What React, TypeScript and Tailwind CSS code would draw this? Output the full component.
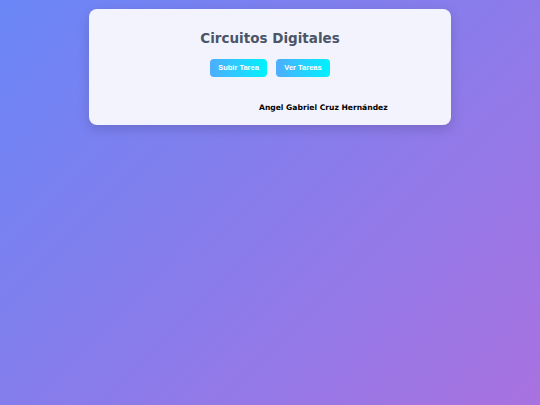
export default function App() {
  return (
    <div className="min-h-screen w-full bg-[linear-gradient(135deg,#6a86f6_0%,#a872e0_100%)] pt-[9px] font-['DejaVu_Sans',sans-serif]">
      <div className="mx-auto flex h-[116px] w-[362px] flex-col rounded-lg bg-[#f3f3fd] shadow-[0_4px_12px_rgba(0,0,0,0.15)]">
        <h1 className="mt-[21px] text-center text-[13.5px] leading-[17px] font-bold text-[#4a5568]">
          Circuitos Digitales
        </h1>
        <div className="mt-[12px] flex justify-center gap-[9px] font-['Liberation_Sans',Arial,sans-serif]">
          <button
            type="button"
            className="h-[18px] w-[57px] rounded-[4px] bg-[linear-gradient(90deg,#4facfe,#00f2fe)] text-[7.5px] font-bold text-white"
          >
            Subir Tarea
          </button>
          <button
            type="button"
            className="h-[18px] w-[54px] rounded-[4px] bg-[linear-gradient(90deg,#4facfe,#00f2fe)] text-[7.5px] font-bold text-white"
          >
            Ver Tareas
          </button>
        </div>
        <p className="mt-[26px] pl-[170px] text-[7.6px] leading-[10px] font-bold text-black">
          Angel Gabriel Cruz Hernández
        </p>
      </div>
    </div>
  );
}
